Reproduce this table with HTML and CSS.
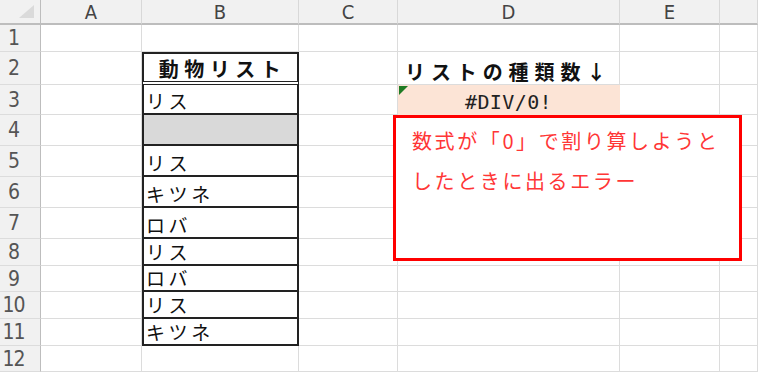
FILE: index.html
```html
<!DOCTYPE html>
<html lang="ja">
<head>
  <meta charset="UTF-8" />
  <meta name="viewport" content="width=device-width, initial-scale=1.0"/>
  <title>動物リスト</title>
  <link rel="stylesheet" href="styles.css">
</head>
<body>
  <div class="sheet">
    <!-- Column headers -->
    <div class="corner"></div>
    <div class="col-head">A</div>
    <div class="col-head">B</div>
    <div class="col-head">C</div>
    <div class="col-head">D</div>
    <div class="col-head">E</div>
    <div class="col-head"></div>

    <!-- Row 1 -->
    <div class="row-head">1</div>
    <div class="cell"></div><div class="cell"></div><div class="cell"></div>
    <div class="cell"></div><div class="cell"></div><div class="cell"></div>

    <!-- Row 2: titles -->
    <div class="row-head">2</div>
    <div class="cell"></div>
    <div class="cell list list-title">動物リスト</div>
    <div class="cell"></div>
    <div class="cell count-title">リストの種類数↓</div>
    <div class="cell"></div><div class="cell"></div>

    <!-- Row 3 -->
    <div class="row-head">3</div>
    <div class="cell"></div>
    <div class="cell list list-first">リス</div>
    <div class="cell"></div>
    <div class="cell count-result">#DIV/0!</div>
    <div class="cell"></div><div class="cell"></div>

    <!-- Row 4: blank entry -->
    <div class="row-head">4</div>
    <div class="cell"></div>
    <div class="cell list blank"></div>
    <div class="cell"></div><div class="cell"></div><div class="cell"></div><div class="cell"></div>

    <div class="row-head">5</div>
    <div class="cell"></div>
    <div class="cell list">リス</div>
    <div class="cell"></div><div class="cell"></div><div class="cell"></div><div class="cell"></div>

    <div class="row-head">6</div>
    <div class="cell"></div>
    <div class="cell list">キツネ</div>
    <div class="cell"></div><div class="cell"></div><div class="cell"></div><div class="cell"></div>

    <div class="row-head">7</div>
    <div class="cell"></div>
    <div class="cell list">ロバ</div>
    <div class="cell"></div><div class="cell"></div><div class="cell"></div><div class="cell"></div>

    <div class="row-head">8</div>
    <div class="cell"></div>
    <div class="cell list">リス</div>
    <div class="cell"></div><div class="cell"></div><div class="cell"></div><div class="cell"></div>

    <div class="row-head">9</div>
    <div class="cell"></div>
    <div class="cell list">ロバ</div>
    <div class="cell"></div><div class="cell"></div><div class="cell"></div><div class="cell"></div>

    <div class="row-head">10</div>
    <div class="cell"></div>
    <div class="cell list">リス</div>
    <div class="cell"></div><div class="cell"></div><div class="cell"></div><div class="cell"></div>

    <div class="row-head">11</div>
    <div class="cell"></div>
    <div class="cell list">キツネ</div>
    <div class="cell"></div><div class="cell"></div><div class="cell"></div><div class="cell"></div>

    <div class="row-head">12</div>
    <div class="cell"></div><div class="cell"></div><div class="cell"></div>
    <div class="cell"></div><div class="cell"></div><div class="cell"></div>

    <!-- Text box floating over the sheet -->
    <div class="note">数式が「0」で割り算しようとしたときに出るエラー</div>
  </div>
</body>
</html>
```

FILE: styles.css
```css
body {
  margin: 0;
  background: #fff;
  overflow: hidden;
  font-family: "Noto Sans CJK JP", sans-serif;
}

.sheet {
  position: relative;
  display: grid;
  grid-template-columns: 41px 101px 157px 99px 222px 100px 1fr;
  grid-template-rows: 25px 27px 33px 30px 31px 31px 31px 31px 27px 26px 27px 27px 26px;
}

/* Headers */
.corner,
.col-head,
.row-head {
  box-sizing: border-box;
  background: #f1f1f1;
  color: #444;
  font-family: "DejaVu Sans", sans-serif;
  font-stretch: condensed;
}

.corner {
  display: flex;
  justify-content: flex-end;
  align-items: flex-end;
  padding: 0 6px 5px 0;
  border-right: 1px solid #bdbdbd;
  border-bottom: 2px solid #bdbdbd;
}
.corner::after {
  content: "";
  width: 15px;
  height: 13px;
  background: #dadada;
  clip-path: polygon(100% 0, 100% 100%, 0 100%);
}

.col-head {
  display: flex;
  align-items: center;
  justify-content: center;
  font-size: 20px;
  border-right: 1px solid #d8d8d8;
  border-bottom: 2px solid #bdbdbd;
}

.row-head {
  display: flex;
  align-items: center;
  justify-content: center;
  padding-right: 13px;
  font-size: 21px;
  letter-spacing: -1px;
  color: #555;
  border-right: 1px solid #bdbdbd;
  border-bottom: 1px solid #dcdcdc;
}

/* Plain cells */
.cell {
  box-sizing: border-box;
  border-right: 1px solid #dcdcdc;
  border-bottom: 1px solid #dcdcdc;
  display: flex;
  align-items: flex-end;
  padding-bottom: 2px;
  font-size: 20px;
  line-height: 20px;
  color: #111;
  white-space: nowrap;
}

/* Animal list in column B */
.list {
  border-left: 2px solid #222;
  border-right: 2px solid #222;
  border-bottom: 2px solid #222;
  padding-left: 2px;
  font-size: 19px;
  letter-spacing: 3.6px;
}
.list-title {
  border-top: 2px solid #222;
  border-bottom: 4px double #222;
  justify-content: center;
  font-size: 20px;
  font-weight: bold;
  letter-spacing: 5.5px;
  padding-left: 4px;
}
.blank {
  background: #d9d9d9;
}

.count-title {
  padding-left: 7px;
  font-weight: bold;
  letter-spacing: 5.9px;
}

.count-result {
  position: relative;
  justify-content: center;
  background: #fce4d6;
  border-color: #fce4d6;
  font-family: "DejaVu Sans Mono", monospace;
  letter-spacing: 0.4px;
  color: #222;
}
/* error indicator */
.count-result::before {
  content: "";
  position: absolute;
  left: 1px;
  top: 1px;
  width: 9px;
  height: 9px;
  background: #1e7b24;
  clip-path: polygon(0 0, 100% 0, 0 100%);
}

.note {
  position: absolute;
  left: 393px;
  top: 115px;
  width: 349px;
  height: 146px;
  box-sizing: border-box;
  border: 3px solid #ff0000;
  background: #fff;
  padding: 3px 4px 0 16px;
  font-size: 20px;
  line-height: 40px;
  letter-spacing: 2.6px;
  color: #ff3636;
}
```
